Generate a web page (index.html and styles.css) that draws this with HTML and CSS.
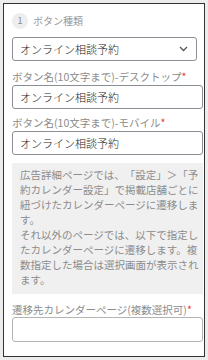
FILE: index.html
```html
<!DOCTYPE html>
<html lang="ja">
<head>
<meta charset="utf-8">
<link rel="stylesheet" href="styles.css">
</head>
<body>
<div class="frame">
  <div class="step">
    <span class="step-num">1</span>
    <span class="step-title">ボタン種類</span>
  </div>
  <div class="select">
    <span class="select-text">オンライン相談予約</span>
    <svg class="chevron" width="9" height="6" viewBox="0 0 9 6"><path d="M1 1 L4.5 4.5 L8 1" fill="none" stroke="#555" stroke-width="1.3"/></svg>
  </div>
  <label class="label">ボタン名(10文字まで)-デスクトップ<span class="req">*</span></label>
  <input class="input" type="text" value="オンライン相談予約">
  <label class="label">ボタン名(10文字まで)-モバイル<span class="req">*</span></label>
  <input class="input" type="text" value="オンライン相談予約">
  <div class="info">広告詳細ページでは、「設定」＞「予約カレンダー設定」で掲載店舗ごとに紐づけたカレンダーページに遷移します。<br>それ以外のページでは、以下で指定したカレンダーページに遷移します。複数指定した場合は選択画面が表示されます。</div>
  <label class="label label-last">遷移先カレンダーページ(複数選択可)<span class="req">*</span></label>
  <div class="multi"></div>
</div>
</body>
</html>
```
FILE: styles.css
```css
* { box-sizing: border-box; }
html, body { margin: 0; padding: 0; }
body {
  width: 208px;
  height: 360px;
  background: #ececec;
  padding: 3px;
  font-family: "Noto Sans CJK JP", "Noto Sans", sans-serif;
  overflow: hidden;
  text-spacing-trim: space-all;
}
.frame {
  width: 202px;
  height: 354px;
  border: 1px solid #333;
  background: #fff;
  padding: 9px 1px 0 8px;
  display: flex;
  flex-direction: column;
}
.step {
  display: flex;
  align-items: center;
  height: 16px;
}
.step-num {
  width: 16px;
  height: 16px;
  border-radius: 50%;
  background: #eeeeee;
  color: #888;
  font-size: 9px;
  line-height: 16px;
  text-align: center;
}
.step-title {
  margin-left: 5px;
  font-size: 10px;
  color: #999;
  line-height: 16px;
}
.select {
  margin-top: 8px;
  width: 185px;
  height: 24px;
  border: 1px solid #8a8f96;
  border-radius: 3px;
  display: flex;
  align-items: center;
  justify-content: space-between;
  padding: 0 8px 0 7px;
}
.select-text {
  font-size: 11px;
  font-weight: 300;
  color: #1a1a1a;
}
.chevron { display: block; }
.label {
  display: block;
  margin-top: 8px;
  margin-bottom: 1px;
  font-size: 10.5px;
  line-height: 15px;
  color: #8c8c8c;
  white-space: nowrap;
}
.input + .label { margin-top: 6px; }
.req { color: #e53935; }
.input {
  display: block;
  width: 100%;
  height: 24px;
  margin: 0;
  border: 1px solid #8a8f96;
  border-radius: 3px;
  padding: 0 7px;
  font-family: "Noto Sans CJK JP", "Noto Sans", sans-serif;
  font-size: 11px;
  font-weight: 300;
  color: #1a1a1a;
  background: #fff;
  outline: none;
}
.info {
  margin-top: 8px;
  background: #f0f0f0;
  padding: 4px 2px 7px 8px;
  font-size: 10.5px;
  line-height: 15px;
  color: #8c8c8c;
}
.label-last {
  margin-top: 8px;
  margin-bottom: 0;
}
.multi {
  height: 25px;
  border: 1px solid #b4b4b4;
  border-radius: 3px;
  background: #fff;
}
```
